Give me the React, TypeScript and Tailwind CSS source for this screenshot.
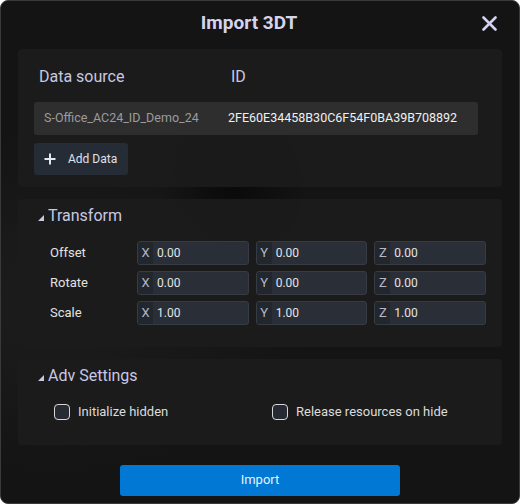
import { useState } from "react";

const font = { fontFamily: "Roboto, 'Noto Sans', sans-serif" };

const AxisInput = ({ axis, value }: { axis: string; value: string }) => {
  return (
    <div className="flex h-[24px] flex-1 overflow-hidden rounded-[3px] border border-[#363b44] bg-[#2a2f37]">
      <div className="flex w-[15px] items-center justify-center bg-[#22262d] text-[13px] text-[#b4b6c8]">
        {axis}
      </div>
      <div className="flex items-center pl-[4px] text-[12px] text-[#e4e4e4]">
        {value}
      </div>
    </div>
  );
};

const Checkbox = ({ label }: { label: string }) => {
  const [checked, setChecked] = useState(false);
  return (
    <label className="flex cursor-pointer items-center gap-[8px]">
      <span
        onClick={() => setChecked(!checked)}
        className="flex h-[16px] w-[16px] items-center justify-center rounded-[4px] border border-[#d6d6d6] bg-[#262b33]"
      >
        {checked && <span className="h-[8px] w-[8px] rounded-[1px] bg-[#d6d6d6]" />}
      </span>
      <span className="text-[13px] text-[#dcdcdc]">{label}</span>
    </label>
  );
};

const SectionTitle = ({ title }: { title: string }) => (
  <div className="flex h-[20px] items-center pl-[20px]">
    {/* 접힘 삼각형 */}
    <svg width="6" height="6" viewBox="0 0 6 6" className="mr-[4px] mt-[3px]">
      <polygon points="6,0 6,6 0,6" fill="#c8c8e0" />
    </svg>
    <span className="text-[16px] text-[#c8c8e4]">{title}</span>
  </div>
);

const rows = [
  { name: "Offset", values: ["0.00", "0.00", "0.00"] },
  { name: "Rotate", values: ["0.00", "0.00", "0.00"] },
  { name: "Scale", values: ["1.00", "1.00", "1.00"] },
];

const App = () => {
  return (
    <div
      style={font}
      className="flex h-[504px] w-[520px] flex-col overflow-hidden rounded-[8px] border border-[#3a3a3a] bg-[#141414] bg-[radial-gradient(ellipse_at_45%_37%,#0a0a0a_0%,transparent_18%),radial-gradient(ellipse_at_10%_60%,#1d1d1d_0%,transparent_40%)]"
    >
      {/* 헤더 */}
      <div className="relative flex h-[48px] shrink-0 items-center justify-center">
        <span className="mb-[4px] mr-[22px] text-[19px] font-bold text-[#d4d4ee]">Import 3DT</span>
        <button className="absolute right-[22px] top-[15px]">
          <svg width="15" height="15" viewBox="0 0 15 15">
            <path
              d="M1.5 1.5 L13.5 13.5 M13.5 1.5 L1.5 13.5"
              stroke="#d2d2f0"
              strokeWidth="2.6"
              strokeLinecap="round"
            />
          </svg>
        </button>
      </div>

      <div className="flex flex-col px-[17px]">
        {/* 데이터 소스 */}
        <div className="rounded-[4px] bg-[#1c1c1c]/90 pb-[12px] pl-[16px] pr-[24px] pt-[18px]">
          <div className="flex h-[20px] items-center pl-[5px] text-[16px] text-[#c8c8e0]">
            <span className="w-[192px]">Data source</span>
            <span>ID</span>
          </div>
          <div className="mt-[15px] flex h-[33px] items-center rounded-[3px] bg-[#2e2e2f] pl-[10px] text-[12.5px]">
            <span className="w-[164px] overflow-hidden whitespace-nowrap text-[#9c9c9c]">
              S-Office_AC24_ID_Demo_24
            </span>
            <span className="ml-[20px] text-[#f0f0f0]">2FE60E34458B30C6F54F0BA39B708892</span>
          </div>
          <button className="mt-[8px] flex h-[32px] w-[94px] items-center rounded-[3px] bg-[#262c35] pl-[10px]">
            <svg width="12" height="12" viewBox="0 0 12 12">
              <path d="M6 0.5 V11.5 M0.5 6 H11.5" stroke="#e6e6f4" strokeWidth="2" />
            </svg>
            <span className="ml-[12px] text-[12px] text-[#e0e0e8]">Add Data</span>
          </button>
        </div>

        {/* 트랜스폼 */}
        <div className="mt-[12px] rounded-[4px] bg-[#1c1c1c]/90 pb-[22px] pt-[7px]">
          <SectionTitle title="Transform" />
          <div className="mt-[15px] flex flex-col gap-[6px] pl-[32px] pr-[16px]">
            {rows.map((row) => (
              <div key={row.name} className="flex items-center">
                <span className="w-[87px] text-[13px] text-[#e2e2e2]">{row.name}</span>
                <div className="flex flex-1 gap-[7px]">
                  <AxisInput axis="X" value={row.values[0]} />
                  <AxisInput axis="Y" value={row.values[1]} />
                  <AxisInput axis="Z" value={row.values[2]} />
                </div>
              </div>
            ))}
          </div>
        </div>

        {/* 고급 설정 */}
        <div className="mt-[12px] rounded-[4px] bg-[#1c1c1c]/90 pb-[23px] pt-[7px]">
          <SectionTitle title="Adv Settings" />
          <div className="mt-[16px] flex pl-[36px]">
            <div className="w-[218px]">
              <Checkbox label="Initialize hidden" />
            </div>
            <Checkbox label="Release resources on hide" />
          </div>
        </div>
      </div>

      <div className="mt-[20px] flex justify-center">
        <button className="h-[31px] w-[280px] rounded-[3px] bg-[#0078d4] text-[13px] text-[#e8f0fa]">
          Import
        </button>
      </div>
    </div>
  );
};

export default App;
